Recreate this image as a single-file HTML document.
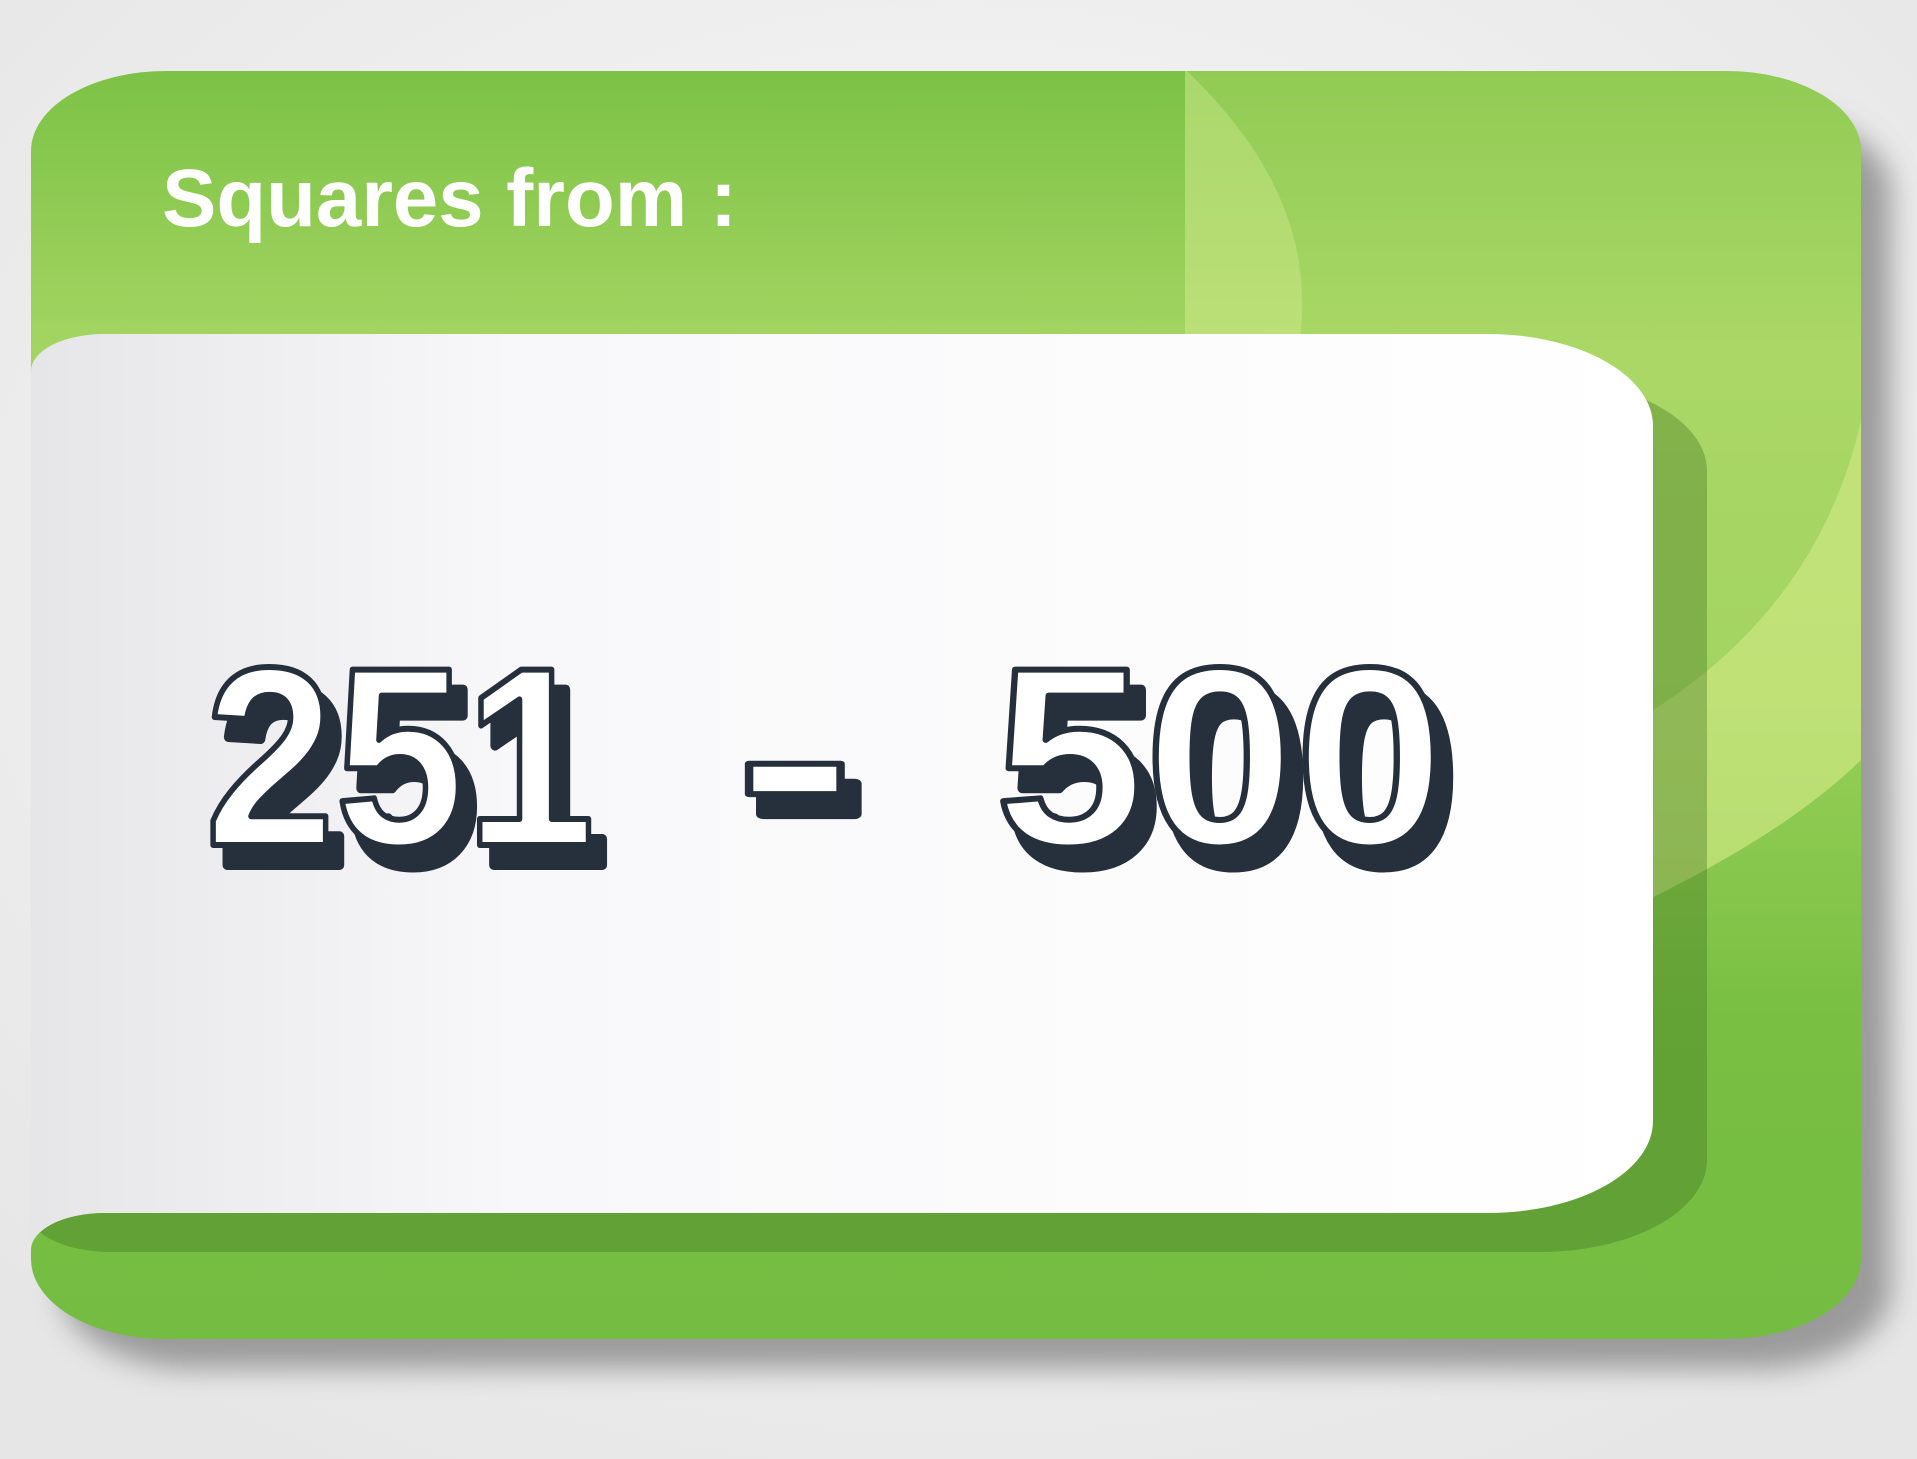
<!DOCTYPE html>
<html><head><meta charset="utf-8"><style>
html,body{margin:0;padding:0;width:1917px;height:1459px;overflow:hidden;background:#f0f0f0;}
svg{display:block}
</style></head><body>
<svg width="1917" height="1459" viewBox="0 0 1917 1459" xmlns="http://www.w3.org/2000/svg">
<defs>
<radialGradient id="bg" cx="50%" cy="40%" r="70%"><stop offset="0" stop-color="#fafafa"/><stop offset="1" stop-color="#e6e6e6"/></radialGradient>
<linearGradient id="gr" x1="0" y1="0" x2="0" y2="1"><stop offset="0" stop-color="#7cc246"/><stop offset="0.22" stop-color="#a4d562"/><stop offset="0.5" stop-color="#98cf58"/><stop offset="0.75" stop-color="#78bf42"/><stop offset="1" stop-color="#74bd42"/></linearGradient>
<linearGradient id="wp" x1="0" y1="0" x2="1" y2="0"><stop offset="0" stop-color="#e6e6e8"/><stop offset="0.3" stop-color="#f8f8fa"/><stop offset="1" stop-color="#ffffff"/></linearGradient>
<filter id="blur" x="-10%" y="-10%" width="120%" height="120%"><feGaussianBlur stdDeviation="14"/></filter>
<clipPath id="card"><path d="M166 71 H1726 A135 80 0 0 1 1861 151 V1259 A135 80 0 0 1 1726 1339 H166 A135 80 0 0 1 31 1259 V151 A135 80 0 0 1 166 71 Z"/></clipPath>
</defs>
<rect width="1917" height="1459" fill="url(#bg)"/>
<path d="M196 111 H1756 A135 80 0 0 1 1891 191 V1289 A135 80 0 0 1 1756 1369 H196 A135 80 0 0 1 61 1289 V191 A135 80 0 0 1 196 111 Z" fill="#7a7a7a" opacity="0.7" filter="url(#blur)"/>
<g clip-path="url(#card)">
<rect x="31" y="71" width="1830" height="1268" fill="url(#gr)"/>
<path d="M1187 71 C1290 170 1310 260 1300 340 L1185 340 L1185 71 Z" fill="#cfe98a" opacity="0.55"/>
<path d="M1187 71 L1861 71 L1861 420 C1830 560 1740 680 1560 760 L1560 340 L1300 340 C1310 260 1290 170 1187 71 Z" fill="#b6dd70" opacity="0.35"/>
<path d="M1861 420 C1830 560 1740 680 1560 760 L1560 940 C1700 880 1800 820 1861 760 Z" fill="#d8ec8a" opacity="0.6"/>
</g>
<path d="M110 379 H1540 A167 92 0 0 1 1707 471 V1160 A167 92 0 0 1 1540 1252 H110 A80 37 0 0 1 31 1215 V416 A80 37 0 0 1 110 379 Z" fill="#3d6e1c" opacity="0.35"/>
<path d="M104 334 H1488 A165 92 0 0 1 1653 426 V1121 A165 92 0 0 1 1488 1213 H104 A73 37 0 0 0 31 1250 V371 A73 37 0 0 1 104 334 Z" fill="url(#wp)"/>
<text x="162" y="226" font-family="Liberation Sans, sans-serif" font-weight="bold" font-size="82" fill="#fff" textLength="575" lengthAdjust="spacingAndGlyphs">Squares from :</text>
<g font-family="Liberation Sans, sans-serif" font-weight="bold" font-size="255" stroke-linejoin="round">
<g fill="#26303c" stroke="#26303c" stroke-width="10" transform="translate(14,20)">
<text x="205" y="845" textLength="390" lengthAdjust="spacingAndGlyphs">251</text>
<text x="735" y="845" textLength="120" lengthAdjust="spacingAndGlyphs">-</text>
<text x="995" y="845" textLength="450" lengthAdjust="spacingAndGlyphs">500</text>
</g>
<g fill="#fff" stroke="#26303c" stroke-width="6">
<text x="205" y="845" textLength="390" lengthAdjust="spacingAndGlyphs">251</text>
<text x="735" y="845" textLength="120" lengthAdjust="spacingAndGlyphs">-</text>
<text x="995" y="845" textLength="450" lengthAdjust="spacingAndGlyphs">500</text>
</g>
</g>
</svg>
</body></html>
